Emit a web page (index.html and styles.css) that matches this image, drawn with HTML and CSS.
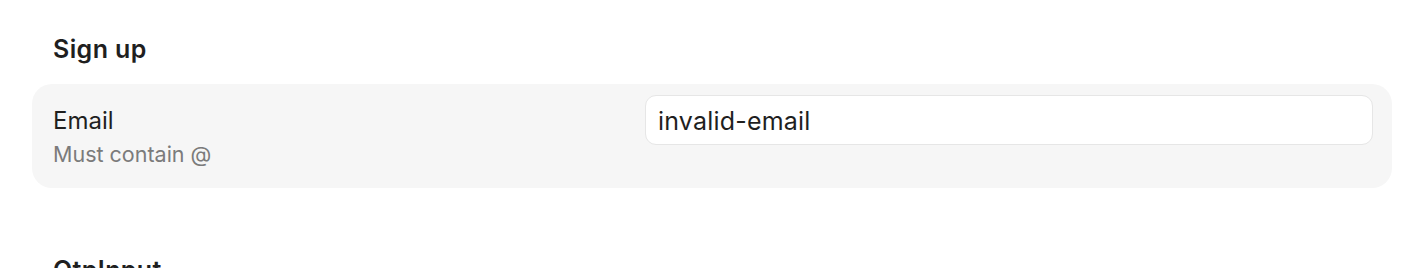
FILE: index.html
```html
<!DOCTYPE html>
<html lang="en">
<head>
<meta charset="utf-8">
<title>Sign up</title>
<link rel="stylesheet" href="styles.css">
</head>
<body>
<main class="page">
  <section class="section">
    <h2 class="section-title">Sign up</h2>
    <div class="card">
      <div class="field-label">
        <div class="label">Email</div>
        <div class="hint">Must contain @</div>
      </div>
      <div class="field-control">
        <input class="text-input" type="text" value="invalid-email">
      </div>
    </div>
  </section>
  <section class="section">
    <h2 class="section-title">OtpInput</h2>
  </section>
</main>
</body>
</html>
```

FILE: styles.css
```css
* { box-sizing: border-box; }
html, body {
  margin: 0;
  padding: 0;
  background: #ffffff;
}
body {
  font-family: Inter, "Noto Sans", "Liberation Sans", sans-serif;
  color: #1f1f1f;
}
.page {
  padding: 33px 32px 0 32px;
}
.section {
  margin-bottom: 66px;
}
.section-title {
  margin: 0 0 19px 0;
  padding-left: 21px;
  font-size: 25px;
  line-height: 32px;
  font-weight: 600;
  letter-spacing: 0.4px;
  color: #1f1f1f;
}
.card {
  display: flex;
  align-items: flex-start;
  background: #f6f6f6;
  border-radius: 20px;
  padding: 11px 19px 11px 21px;
}
.field-label {
  flex: 1;
  padding: 11px 0 10px 0;
}
.label {
  font-size: 24px;
  line-height: 30px;
  color: #1f1f1f;
}
.hint {
  font-size: 21.5px;
  line-height: 26px;
  color: #7b7b7b;
  margin-top: 5px;
}
.field-control {
  width: 728px;
}
.text-input {
  display: block;
  width: 100%;
  height: 50px;
  border: 1px solid #e6e6e6;
  border-radius: 11px;
  background: #ffffff;
  padding: 2px 12px 0 12px;
  font-family: inherit;
  font-size: 25px;
  letter-spacing: 0.2px;
  color: #1f1f1f;
  outline: none;
}
```
